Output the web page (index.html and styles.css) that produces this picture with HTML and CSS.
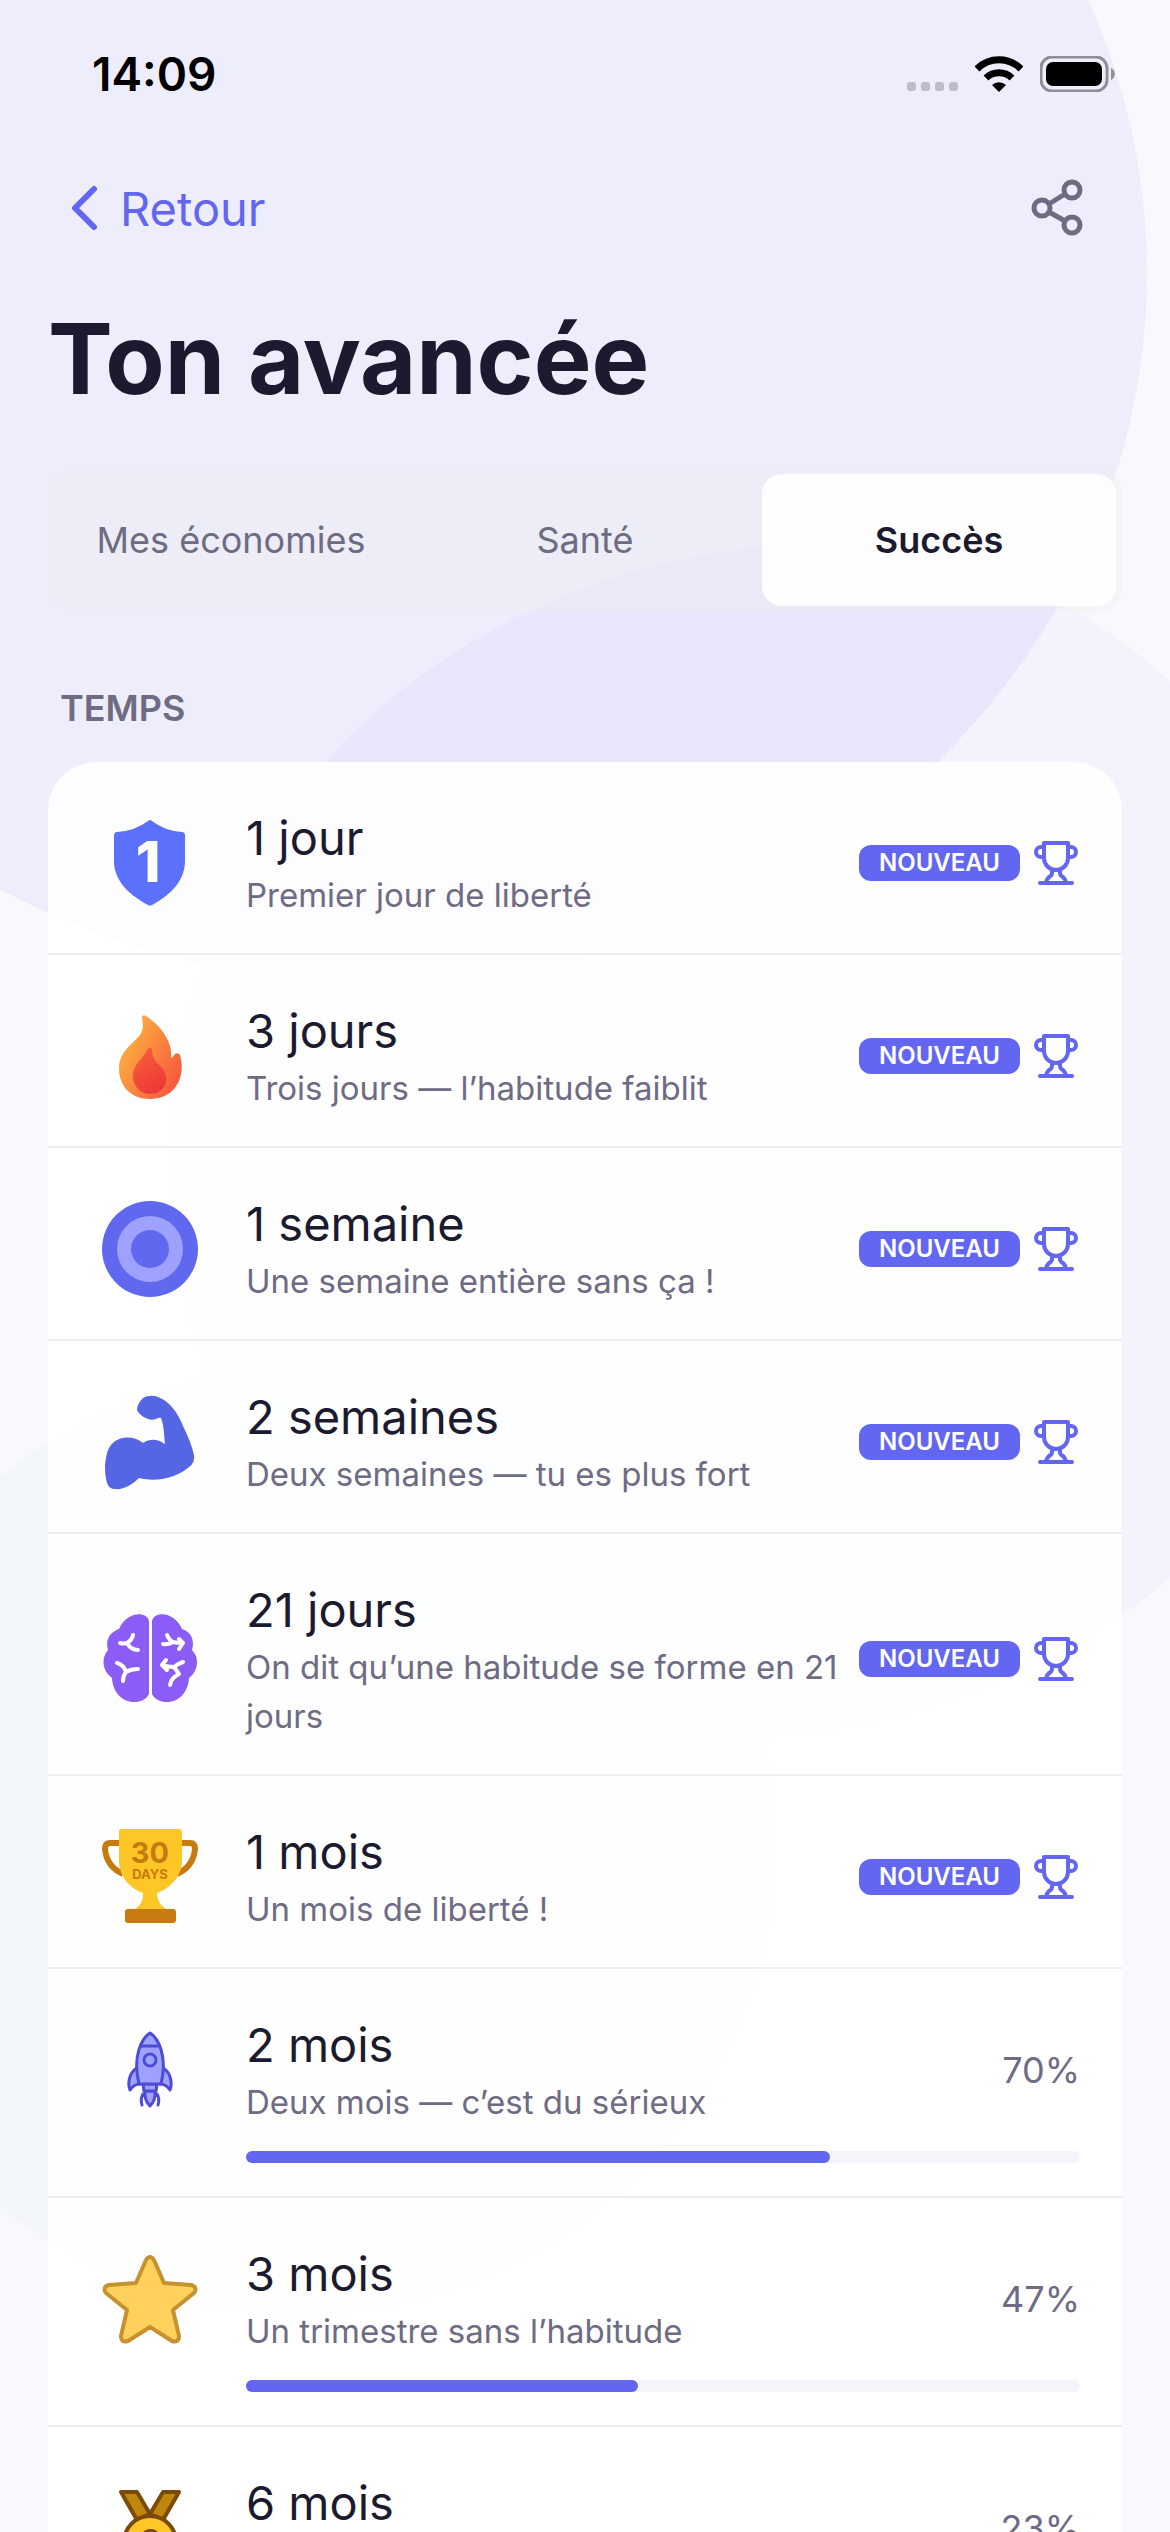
FILE: index.html
```html
<!DOCTYPE html>
<html lang="fr">
<head>
    <meta charset="UTF-8">
    <meta name="viewport" content="width=device-width, initial-scale=1.0">
    <title>Ton avancée</title>
    <link rel="stylesheet" href="styles.css">
</head>
<body>

<!-- shared icons -->
<svg class="sprite" aria-hidden="true">
    <symbol id="cup" viewBox="0 0 48 48">
        <path d="M12 4h24v15a12 12 0 0 1-24 0zM12 8H9a5 5 0 0 0-5 5a5 5 0 0 0 5 5h3M36 8h3a5 5 0 0 1 5 5a5 5 0 0 1-5 5h-3M20 31v3c0 2-1 3-3 4c-2 2-3 4-3 6M28 31v3c0 2 1 3 3 4c2 2 3 4 3 6M8 44h32"/>
    </symbol>
</svg>

<div class="screen">
    <svg class="backdrop" viewBox="0 0 1170 2532" preserveAspectRatio="xMidYMin slice" aria-hidden="true">
        <ellipse cx="382" cy="273" rx="765" ry="711" fill="#6366f1" fill-opacity=".07"/>
        <path d="M168 1160A662 616 0 0 1 830 544A540 616 0 0 1 1370 1160A662 570 0 0 1 708 1740A540 580 0 0 1 168 1160z" fill="#8b5cf6" fill-opacity=".04"/>
        <circle cx="303" cy="1842" r="474" fill="#14b8a6" fill-opacity=".02"/>
    </svg>

    <div class="status">
        <span class="time">14:09</span>
        <div class="status-icons">
            <svg width="51" height="36" viewBox="0 0 51 36" fill="#bdbcca">
                <rect x="0" y="26" width="9" height="9" rx="3"/>
                <rect x="14" y="26" width="9" height="9" rx="3"/>
                <rect x="28" y="26" width="9" height="9" rx="3"/>
                <rect x="42" y="26" width="9" height="9" rx="3"/>
            </svg>
            <svg width="48" height="36" viewBox="0 0 48 36">
                <path d="M2 13a31 31 0 0 1 44 0M11 22a19 19 0 0 1 26 0" fill="none" stroke="#000" stroke-width="7"/>
                <path d="M24 36l-7-7a10 10 0 0 1 14 0z"/>
            </svg>
            <svg width="76" height="36" viewBox="0 0 76 36">
                <rect x="1" y="1" width="66" height="34" rx="11" fill="none" stroke="#8f8e98" stroke-width="3"/>
                <rect x="6" y="6" width="56" height="24" rx="7"/>
                <path d="M71 12c5 2 5 10 0 12z" fill="#8f8e98"/>
            </svg>
        </div>
    </div>

    <header class="nav">
        <a class="back" href="#">
            <svg width="30" height="48" viewBox="0 0 30 48"><path d="M24 5L5 24l19 19"/></svg>
            Retour
        </a>
        <button class="share" type="button" aria-label="Partager">
            <svg width="54" height="60" viewBox="0 0 54 60">
                <circle cx="12" cy="30" r="8"/>
                <circle cx="42" cy="12" r="8"/>
                <circle cx="42" cy="47" r="8"/>
                <path d="M19 26l16-10M19 34l16 9"/>
            </svg>
        </button>
    </header>

    <main>
        <h1>Ton avancée</h1>

        <nav class="tabs">
            <button type="button">Mes économies</button>
            <button type="button">Santé</button>
            <button type="button" class="active">Succès</button>
        </nav>

        <h2>TEMPS</h2>

        <ul class="card">
            <li>
                <div class="row">
                    <svg class="icon" viewBox="0 0 96 96">
                        <path d="M46 6q2-2 4 0q13 10 30 11q3 0 3 4v25c0 22-18 36-33 44q-2 1-4 0C31 82 12 68 12 46V21q0-4 3-4q18-1 31-11z" fill="#5b70fb"/>
                        <text x="46" y="67" font-size="56" font-weight="800" text-anchor="middle" fill="#fff">1</text>
                    </svg>
                    <div class="text">
                        <h3>1 jour</h3>
                        <p>Premier jour de liberté</p>
                    </div>
                    <span class="badge">NOUVEAU</span>
                    <svg class="cup"><use href="#cup"/></svg>
                </div>
            </li>
            <li>
                <div class="row">
                    <svg class="icon" viewBox="0 0 96 96">
                        <defs>
                            <linearGradient id="flame" x1="0" y1="0.2" x2="1" y2="0.9">
                                <stop offset="0.2" stop-color="#fca43f"/>
                                <stop offset="1" stop-color="#f5503f"/>
                            </linearGradient>
                            <linearGradient id="flameIn" x1="0" y1="0" x2="0.5" y2="1">
                                <stop offset="0" stop-color="#fa6238"/>
                                <stop offset="1" stop-color="#ee3a3a"/>
                            </linearGradient>
                        </defs>
                        <path d="M40 9q1-3 4-1C59 18 71 34 69 50q2-1 4-4q3-2 5 1c6 21-4 44-30 44C29 91 17 78 17 61C17 43 31 36 38 27c4-6 3-12 2-18z" fill="url(#flame)"/>
                        <path d="M46 41q2-3 4 0c0 18 14 14 14 30c0 9-7 15-16 15c-10 0-17-8-17-18c0-12 10-17 15-27z" fill="url(#flameIn)"/>
                    </svg>
                    <div class="text">
                        <h3>3 jours</h3>
                        <p>Trois jours — l’habitude faiblit</p>
                    </div>
                    <span class="badge">NOUVEAU</span>
                    <svg class="cup"><use href="#cup"/></svg>
                </div>
            </li>
            <li>
                <div class="row">
                    <svg class="icon" viewBox="0 0 96 96">
                        <circle cx="48" cy="48" r="48" fill="#6068ef"/>
                        <circle cx="48" cy="48" r="33" fill="#9fa1ff"/>
                        <circle cx="48" cy="48" r="19" fill="#6068ef"/>
                    </svg>
                    <div class="text">
                        <h3>1 semaine</h3>
                        <p>Une semaine entière sans ça !</p>
                    </div>
                    <span class="badge">NOUVEAU</span>
                    <svg class="cup"><use href="#cup"/></svg>
                </div>
            </li>
            <li>
                <div class="row">
                    <svg class="icon" viewBox="0 0 96 96">
                        <path d="M41 4C46 1 53 1 58 4C68 8 76 19 81 32C86 42 90 52 92 61Q93 69 87 73C77 82 57 89 37 84C30 91 21 96 13 95Q7 95 5 89C3 82 3 76 3 71C4 63 5 56 9 51C16 42 31 41 41 49C48 44 56 45 63 50C62 40 62 32 59 24Q57 23 54 25C47 28 37 21 35 16Q35 10 41 4z" fill="#5566e4"/>
                    </svg>
                    <div class="text">
                        <h3>2 semaines</h3>
                        <p>Deux semaines — tu es plus fort</p>
                    </div>
                    <span class="badge">NOUVEAU</span>
                    <svg class="cup"><use href="#cup"/></svg>
                </div>
            </li>
            <li>
                <div class="row">
                    <svg class="icon" viewBox="0 0 96 96">
                        <path d="M47 10C45 0 25 0 17 18C8 21 3 29 6 39C-1 47 0 60 10 67C12 95 41 96 47 83z" fill="#8b5cf6"/>
                        <path d="M50 10C52 0 72 0 80 18C89 21 93 29 90 39C98 47 96 60 87 67C85 95 56 96 50 83z" fill="#8b5cf6"/>
                        <path d="M31 24q-1 5-6 8q-3 1-7 0M25 32q4 7 11 7M15 52q7 2 9 9q5-3 12-3M24 61q-3 4-3 9M65 24q2 5 6 7q-5 3-10 2M71 31q4 1 10 1l-4-4M81 32l-4 6M81 51q-6 2-9 5q-6 0-12-2l4-5M60 54l5 5M72 56l5 7q-8 4-9 11" fill="none" stroke="#fff" stroke-width="4" stroke-linecap="round" stroke-linejoin="round"/>
                    </svg>
                    <div class="text">
                        <h3>21 jours</h3>
                        <p>On dit qu’une habitude se forme en 21 jours</p>
                    </div>
                    <span class="badge">NOUVEAU</span>
                    <svg class="cup"><use href="#cup"/></svg>
                </div>
            </li>
            <li>
                <div class="row">
                    <svg class="icon" viewBox="0 0 96 96">
                        <path d="M18 14H8Q3 14 3 20C4 31 10 40 21 45M78 14h10q5 0 5 6C92 31 86 40 75 45" fill="none" stroke="#c77a10" stroke-width="6"/>
                        <path d="M19 0h58q3 0 3 3v28c0 16-11 28-25 33q0 10 9 16H33q9-6 8-16C27 59 17 47 17 31V3q0-3 2-3z" fill="#ffc627"/>
                        <rect x="23" y="80" width="51" height="14" rx="3" fill="#c77a10"/>
                        <text x="48" y="34" font-size="29" font-weight="700" text-anchor="middle" fill="#c77a10">30</text>
                        <text x="48" y="50" font-size="13" font-weight="700" text-anchor="middle" fill="#c77a10">DAYS</text>
                    </svg>
                    <div class="text">
                        <h3>1 mois</h3>
                        <p>Un mois de liberté !</p>
                    </div>
                    <span class="badge">NOUVEAU</span>
                    <svg class="cup"><use href="#cup"/></svg>
                </div>
            </li>
            <li>
                <div class="row">
                    <svg class="icon" viewBox="0 0 96 96">
                        <g fill="#9fa1ff" stroke="#4d4bd6" stroke-width="3" stroke-linejoin="round" stroke-linecap="round">
                            <path d="M35 46C28 50 25 60 28 68Q32 62 38 62zM61 46C68 50 71 60 68 68Q64 62 58 62z"/>
                            <path d="M43 69Q42 78 48 84Q54 78 53 69zM41 72q-3 5-1 11M55 72q3 5 1 11"/>
                            <path d="M41 62h14l-1 7H42z"/>
                            <path d="M48 11C40 16 30 34 37 62h22C66 34 56 16 48 11z"/>
                            <path d="M39 24h18"/>
                            <circle cx="48" cy="38" r="6"/>
                        </g>
                    </svg>
                    <div class="text">
                        <h3>2 mois</h3>
                        <p>Deux mois — c’est du sérieux</p>
                    </div>
                    <span class="percent">70%</span>
                </div>
                <div class="bar"><div class="fill" style="width: 70%"></div></div>
            </li>
            <li>
                <div class="row">
                    <svg class="icon" viewBox="0 0 96 96">
                        <path d="M44 9q4-6 8 0l10 23l27 2q7 2 3 8L71 59l6 26q0 7-7 5L48 76L26 90q-7 2-7-5l6-26L4 42q-4-6 3-8l27-2z" fill="#ffd15c" stroke="#c6922f" stroke-width="4" stroke-linejoin="round"/>
                    </svg>
                    <div class="text">
                        <h3>3 mois</h3>
                        <p>Un trimestre sans l’habitude</p>
                    </div>
                    <span class="percent">47%</span>
                </div>
                <div class="bar"><div class="fill" style="width: 47%"></div></div>
            </li>
            <li>
                <div class="row">
                    <svg class="icon" viewBox="0 0 96 96">
                        <g stroke="#7a4a08" stroke-width="4" stroke-linejoin="round">
                            <path d="M19 12h16l13 22l-13 6zM77 12H61L48 34l13 6z" fill="#bf850d"/>
                            <circle cx="48" cy="62" r="26" fill="#ffc627"/>
                        </g>
                        <text x="48" y="75" font-size="36" font-weight="700" text-anchor="middle" fill="#7a4a08">6</text>
                    </svg>
                    <div class="text">
                        <h3>6 mois</h3>
                        <p>Six mois de liberté</p>
                    </div>
                    <span class="percent">23%</span>
                </div>
                <div class="bar"><div class="fill" style="width: 23%"></div></div>
            </li>
        </ul>
    </main>
</div>

</body>
</html>
```
FILE: styles.css
```css
* {
    box-sizing: border-box;
}
body {
    margin: 0;
    font-family: Inter, "Liberation Sans", sans-serif;
    color: #1c1a2e;
    background: #f8f8fd;
}
h1, h2, h3, p, ul {
    margin: 0;
    padding: 0;
}
button {
    border: 0;
    padding: 0;
    background: none;
    font: inherit;
    color: inherit;
}
.sprite {
    display: none;
}
.screen {
    position: relative;
    height: 100vh;
    overflow: hidden;
}
.backdrop {
    position: absolute;
    top: 0;
    left: 0;
    width: 100%;
    z-index: -1;
}

/* status bar */
.status {
    display: flex;
    justify-content: space-between;
    align-items: center;
    height: 148px;
    padding: 0 54px 0 92px;
}
.time {
    font-size: 46px;
    font-weight: 600;
    color: #000;
}
.status-icons {
    display: flex;
    align-items: center;
    gap: 17px;
}

/* navigation */
.nav {
    display: flex;
    justify-content: space-between;
    align-items: center;
    height: 120px;
    padding: 0 86px 0 70px;
}
.back {
    display: flex;
    align-items: center;
    gap: 20px;
    font-size: 47px;
    color: #6366f1;
    text-decoration: none;
}
.back svg {
    fill: none;
    stroke: #6366f1;
    stroke-width: 6;
    stroke-linecap: round;
    stroke-linejoin: round;
}
.share svg {
    display: block;
    fill: none;
    stroke: #6e6b83;
    stroke-width: 5;
}

main {
    padding: 0 48px;
}
h1 {
    padding: 30px 0 48px;
    font-size: 97px;
    font-weight: 700;
    line-height: 122px;
}

/* tabs */
.tabs {
    display: grid;
    grid-template-columns: repeat(3, 1fr);
    padding: 6px;
    border-radius: 24px;
    background: rgba(240, 238, 235, 0.3);
}
.tabs button {
    height: 132px;
    border-radius: 20px;
    font-size: 36px;
    color: #6e6b83;
}
.tabs .active {
    background: rgba(255, 255, 255, 0.88);
    color: #1c1a2e;
    font-weight: 600;
}

h2 {
    padding: 72px 12px 30px;
    font-size: 36px;
    font-weight: 600;
    line-height: 48px;
    color: #6e6b83;
}

/* achievements */
.card {
    list-style: none;
    border-radius: 48px;
    background: rgba(255, 255, 255, 0.88);
}
.card li {
    padding: 43px 42px 33px;
    border-bottom: 2px solid #eeeef0;
}
.row {
    display: flex;
    align-items: center;
}
.icon {
    flex: none;
    width: 96px;
    height: 96px;
    margin: 0 48px 0 12px;
}
.text {
    flex: 1;
}
.text h3 {
    font-size: 47px;
    font-weight: 400;
    line-height: 66px;
}
.text p {
    font-size: 33px;
    line-height: 49px;
    color: #6e6b83;
}
.badge {
    padding: 0 20px;
    border-radius: 12px;
    background: #6366f1;
    color: #fff;
    font-size: 24px;
    font-weight: 600;
    line-height: 36px;
}
.cup {
    width: 48px;
    height: 48px;
    margin-left: 12px;
    fill: none;
    stroke: #6366f1;
    stroke-width: 4;
    stroke-linecap: round;
    stroke-linejoin: round;
}
.percent {
    font-size: 36px;
    color: #6e6b83;
}
.bar {
    height: 12px;
    margin: 24px 0 0 156px;
    border-radius: 6px;
    background: #f5f4fa;
}
.fill {
    height: 12px;
    border-radius: 6px;
    background: #6366f1;
}
```
